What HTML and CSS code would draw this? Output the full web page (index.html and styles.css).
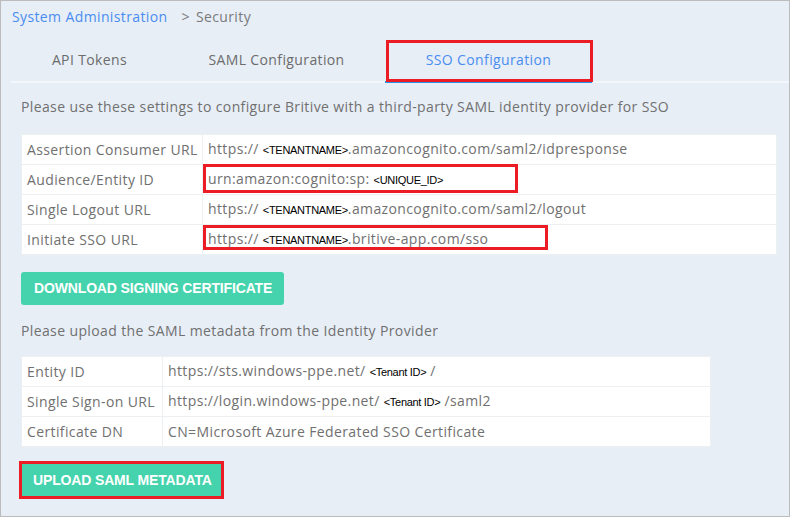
FILE: index.html
```html
<!DOCTYPE html>
<html>
<head>
<meta charset="utf-8">
<link rel="stylesheet" href="styles.css">
</head>
<body>
<div class="page">
  <div class="crumbs"><span class="crumb-link">System Administration</span><span class="crumb-sep">&gt;</span><span class="crumb-cur">Security</span></div>
  <div class="tabs">
    <div class="tab tab-api">API Tokens</div>
    <div class="tab tab-saml">SAML Configuration</div>
    <div class="tab tab-sso active">SSO Configuration<span class="mark mark-tab"></span></div>
  </div>
  <p class="note note-top">Please use these settings to configure Britive with a third-party SAML identity provider for SSO</p>
  <table class="grid grid-sp">
    <tr><td class="lbl">Assertion Consumer URL</td><td class="val">https:// <span class="ph">&lt;TENANTNAME&gt;</span>.amazoncognito.com/saml2/idpresponse</td></tr>
    <tr><td class="lbl">Audience/Entity ID</td><td class="val">urn:amazon:cognito:sp: <span class="ph">&lt;UNIQUE_ID&gt;</span><span class="mark mark-aud"></span></td></tr>
    <tr><td class="lbl">Single Logout URL</td><td class="val">https:// <span class="ph">&lt;TENANTNAME&gt;</span>.amazoncognito.com/saml2/logout</td></tr>
    <tr><td class="lbl">Initiate SSO URL</td><td class="val">https:// <span class="ph">&lt;TENANTNAME&gt;</span>.britive-app.com/sso<span class="mark mark-sso"></span></td></tr>
  </table>
  <div class="btn-row btn-row-dl"><span class="btn">DOWNLOAD SIGNING CERTIFICATE</span></div>
  <p class="note note-up">Please upload the SAML metadata from the Identity Provider</p>
  <table class="grid grid-idp">
    <tr><td class="lbl">Entity ID</td><td class="val">https://sts.windows-ppe.net/ <span class="ph">&lt;Tenant ID&gt;</span> /</td></tr>
    <tr><td class="lbl">Single Sign-on URL</td><td class="val">https://login.windows-ppe.net/ <span class="ph">&lt;Tenant ID&gt;</span> /saml2</td></tr>
    <tr><td class="lbl">Certificate DN</td><td class="val">CN=Microsoft Azure Federated SSO Certificate</td></tr>
  </table>
  <div class="btn-row btn-row-up"><span class="btn btn-marked">UPLOAD SAML METADATA</span></div>
</div>
</body>
</html>
```
FILE: styles.css
```css
* { box-sizing: border-box; }
html, body { margin: 0; padding: 0; }
body {
  width: 790px;
  height: 517px;
  overflow: hidden;
  font-family: "Open Sans", "Liberation Sans", sans-serif;
  letter-spacing: 0.38px;
}
.page {
  width: 790px;
  height: 517px;
  background: #e7eef6;
  border: 1px solid #bcbcbc;
  padding: 0 0 0 10px;
  color: #707070;
}
.crumbs {
  height: 33px;
  padding: 6px 0 0 1px;
  font-size: 14px;
  line-height: 20px;
}
.crumb-link { color: #4a8df0; }
.crumb-sep { margin-left: 14px; margin-right: 6px; color: #7a7a7a; }
.crumb-cur { color: #7a7a7a; }
.tabs {
  display: flex;
  height: 49px;
  border-bottom: 2px solid #f3f6fa;
  position: relative;
}
.tab {
  position: relative;
  font-size: 14px;
  line-height: 20px;
  padding-top: 16px;
  text-align: center;
  color: #6c6c6c;
}
.tab-api { width: 157px; }
.tab-saml { width: 217px; }
.tab-sso { width: 207px; color: #4a8df0; }
.tab.active { border-bottom: 2px solid #2a92e8; margin-bottom: -2px; }
.mark {
  position: absolute;
  border: 3px solid #ec1c24;
  pointer-events: none;
}
.mark-tab { left: 1px; top: 6px; right: -1px; bottom: -1px; }
.note {
  margin: 0;
  font-size: 14px;
  line-height: 20px;
}
.note-top { padding: 14px 0 0 10px; height: 51px; }
.note-up { padding: 16px 0 0 10px; height: 51px; }
.grid {
  margin-left: 10px;
  border-collapse: collapse;
  background: #fff;
  font-size: 14px;
}
.grid-sp { width: 756px; }
.grid-idp { width: 690px; }
.grid td {
  height: 30px;
  padding: 0 0 0 5px;
  border: 1px solid #edf0f3;
  white-space: nowrap;
  vertical-align: middle;
  line-height: 20px;
}
.grid-sp .lbl { width: 181px; }
.grid-idp .lbl { width: 141px; }
.grid .val { position: relative; padding-left: 5px; }
.ph {
  font-family: "Liberation Sans", Arial, sans-serif;
  font-size: 11px;
  letter-spacing: -0.3px;
  color: #000;
}
.mark-aud { left: 0; top: -1px; width: 315px; height: 29px; }
.mark-sso { left: 0; top: 0; width: 345px; height: 25px; }
.btn-row { display: flex; padding-left: 10px; }
.btn-row-dl { padding-top: 17px; }
.btn-row-up { padding-top: 16px; }
.btn {
  display: inline-block;
  background: #45d3ad;
  color: #fff;
  font-family: "Liberation Sans", Arial, sans-serif;
  font-weight: bold;
  font-size: 14px;
  letter-spacing: -0.15px;
  line-height: 33px;
  height: 33px;
  padding: 0 12px 0 13px;
  border-radius: 3px;
}
.btn-marked {
  outline: 3px solid #ec1c24;
  outline-offset: -1px;
  border-radius: 0;
  height: 34px;
  line-height: 34px;
  padding: 0 10px 0 12px;
}
```
